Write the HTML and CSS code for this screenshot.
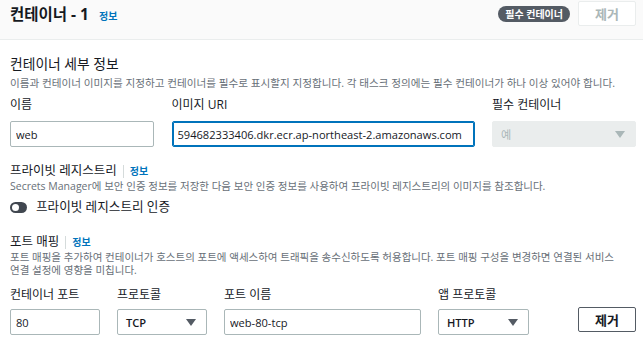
FILE: index.html
```html
<!DOCTYPE html>
<html lang="ko">
  <head>
    <meta charset="UTF-8" />
    <meta name="viewport" content="width=device-width, initial-scale=1.0" />
    <title>컨테이너 - 1</title>
    <link rel="stylesheet" href="styles.css">
  </head>
  <body>
    <header class="container-header">
      <h1>컨테이너 - 1 <a href="#" class="info-link">정보</a></h1>
      <div class="header-actions">
        <span class="badge">필수 컨테이너</span>
        <button class="btn btn-disabled" disabled>제거</button>
      </div>
    </header>

    <main class="content">
      <h2 class="section-title">컨테이너 세부 정보</h2>
      <p class="section-desc">이름과 컨테이너 이미지를 지정하고 컨테이너를 필수로 표시할지 지정합니다. 각 태스크 정의에는 필수 컨테이너가 하나 이상 있어야 합니다.</p>

      <div class="detail-grid">
        <div class="field">
          <label>이름</label>
          <input type="text" value="web" />
        </div>
        <div class="field">
          <label>이미지 URI</label>
          <input type="text" class="focused" value="594682333406.dkr.ecr.ap-northeast-2.amazonaws.com" />
        </div>
        <div class="field">
          <label>필수 컨테이너</label>
          <div class="select select-disabled">예<span class="caret"></span></div>
        </div>
      </div>

      <div class="sub-title registry-title">프라이빗 레지스트리<span class="divider"></span><a href="#" class="info-link">정보</a></div>
      <p class="sub-desc">Secrets Manager에 보안 인증 정보를 저장한 다음 보안 인증 정보를 사용하여 프라이빗 레지스트리의 이미지를 참조합니다.</p>
      <div class="toggle-row">
        <span class="toggle"><span class="knob"></span></span>
        <span>프라이빗 레지스트리 인증</span>
      </div>

      <div class="sub-title port-title">포트 매핑<span class="divider"></span><a href="#" class="info-link">정보</a></div>
      <p class="sub-desc">포트 매핑을 추가하여 컨테이너가 호스트의 포트에 액세스하여 트래픽을 송수신하도록 허용합니다. 포트 매핑 구성을 변경하면 연결된 서비스<br />연결 설정에 영향을 미칩니다.</p>

      <div class="port-row">
        <div class="field w-port">
          <label>컨테이너 포트</label>
          <input type="text" value="80" />
        </div>
        <div class="field w-port">
          <label>프로토콜</label>
          <div class="select">TCP<span class="caret"></span></div>
        </div>
        <div class="field w-name">
          <label>포트 이름</label>
          <input type="text" value="web-80-tcp" />
        </div>
        <div class="field w-app">
          <label>앱 프로토콜</label>
          <div class="select">HTTP<span class="caret"></span></div>
        </div>
        <button class="btn btn-remove">제거</button>
      </div>
    </main>
  </body>
</html>
```

FILE: styles.css
```css
body {
  margin: 0;
  background-color: white;
  color: #16191f;
  font-family: "Open Sans", "Noto Sans CJK KR", sans-serif;
}

.container-header {
  height: 39px;
  border-bottom: 1px solid #eaeded;
  background-color: #fafafa;
  padding: 0 7px 0 10px;
  display: flex;
  justify-content: space-between;
  align-items: flex-start;
}

.container-header h1 {
  margin: 0;
  padding-top: 1px;
  font-size: 15.5px;
  line-height: 26px;
  font-weight: bold;
}

.info-link {
  color: #0073bb;
  font-size: 10px;
  font-weight: bold;
  text-decoration: none;
}

.container-header .info-link {
  margin-left: 6px;
}

.header-actions {
  display: flex;
  align-items: center;
  gap: 8px;
  padding-top: 1px;
}

.badge {
  background-color: #545b64;
  color: white;
  font-size: 10px;
  font-weight: bold;
  line-height: 16px;
  padding: 0 7px;
  border-radius: 8px;
}

.btn {
  font-family: "Open Sans", "Noto Sans CJK KR", sans-serif;
  font-size: 13px;
  font-weight: bold;
  background-color: white;
  border-radius: 2px;
  cursor: pointer;
}

.btn-disabled {
  width: 58px;
  height: 25px;
  border: 1px solid #eaeded;
  color: #aab7b8;
}

.content {
  padding: 0 7px 0 10px;
}

.section-title {
  margin: 15px 0 0;
  font-size: 13.8px;
  font-weight: normal;
  line-height: 18px;
}

.section-desc {
  margin: 3px 0 0;
  font-size: 10.6px;
  line-height: 14px;
  color: #687078;
}

.detail-grid {
  display: grid;
  grid-template-columns: 144px 303px 144px;
  justify-content: space-between;
  margin-top: 6px;
}

.field {
  display: flex;
  flex-direction: column;
}

.field label {
  font-size: 12px;
  line-height: 18px;
  margin-bottom: 7px;
}

.field input,
.select {
  box-sizing: border-box;
  height: 26px;
  border: 1px solid #aab7b8;
  border-radius: 2px;
  padding: 0 5px;
  font-family: "Open Sans", "Noto Sans CJK KR", sans-serif;
  font-size: 11.1px;
  color: #16191f;
  background-color: white;
}

.field input.focused {
  border-color: #0073bb;
  box-shadow: 0 0 0 1px #0073bb inset;
}

.select {
  display: flex;
  align-items: center;
  justify-content: space-between;
  padding: 0 10px 0 8px;
  font-weight: 600;
}

.select-disabled {
  background-color: #eaeded;
  border-color: #eaeded;
  color: #aab7b8;
  font-weight: normal;
}

.caret {
  width: 0;
  height: 0;
  border-left: 5px solid transparent;
  border-right: 5px solid transparent;
  border-top: 7px solid #545b64;
}

.select-disabled .caret {
  border-top-color: #aab7b8;
}

.sub-title {
  font-size: 12.5px;
  line-height: 16px;
  display: flex;
  align-items: center;
}

.registry-title {
  margin-top: 16px;
}

.port-title {
  margin-top: 18px;
}

.divider {
  display: inline-block;
  width: 1px;
  height: 13px;
  background-color: #d5dbdb;
  margin: 0 6px 0 6px;
}

.sub-desc {
  margin: 1px 0 0;
  font-size: 10.5px;
  line-height: 13px;
  color: #687078;
}

.toggle-row {
  display: flex;
  align-items: center;
  gap: 9px;
  margin-top: 5px;
  font-size: 12.6px;
  line-height: 18px;
}

.toggle {
  box-sizing: border-box;
  width: 17px;
  height: 11px;
  border-radius: 6px;
  background-color: #414750;
  padding: 2px;
  display: flex;
}

.knob {
  width: 7px;
  height: 7px;
  border-radius: 50%;
  background-color: white;
}

.port-row {
  display: flex;
  gap: 17px;
  margin-top: 9px;
}

.port-row .field label {
  margin-bottom: 5px;
}

.w-port {
  width: 90px;
}

.w-name {
  width: 197px;
}

.w-app {
  width: 91px;
}

.btn-remove {
  margin-left: auto;
  align-self: flex-end;
  margin-bottom: 3px;
  width: 58px;
  height: 25px;
  border: 1px solid #545b64;
  color: #16191f;
}
```
